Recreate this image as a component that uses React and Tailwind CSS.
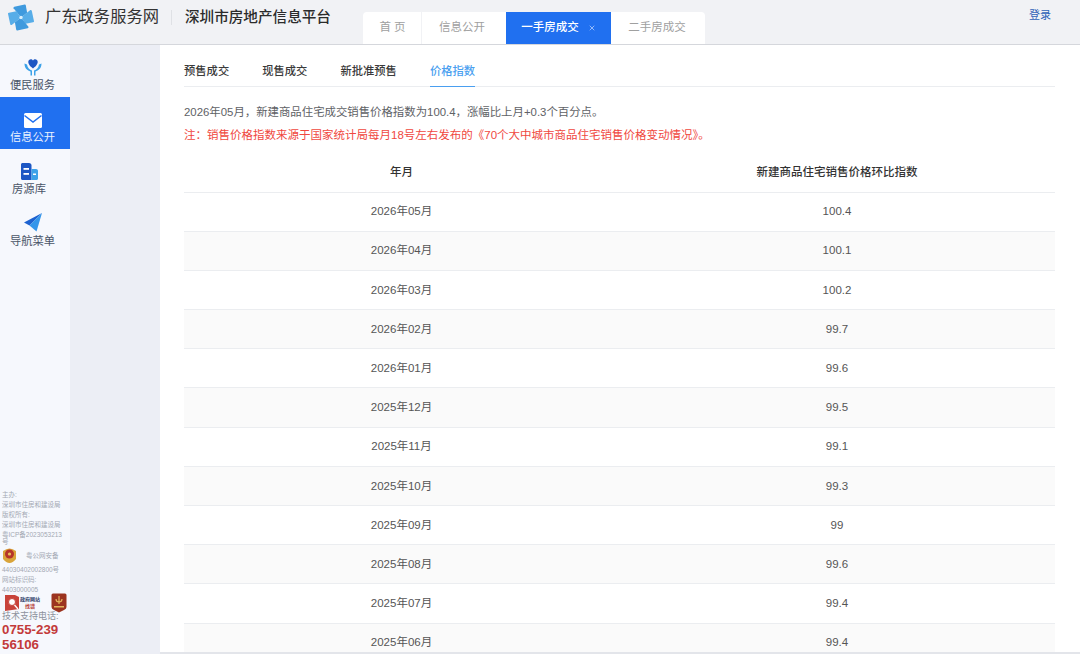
import React from "react";
import { X } from "lucide-react";

const font = "font-['Liberation_Sans','Noto_Sans_CJK_SC',sans-serif]";

const rows = [
  ["2026年05月", "100.4"],
  ["2026年04月", "100.1"],
  ["2026年03月", "100.2"],
  ["2026年02月", "99.7"],
  ["2026年01月", "99.6"],
  ["2025年12月", "99.5"],
  ["2025年11月", "99.1"],
  ["2025年10月", "99.3"],
  ["2025年09月", "99"],
  ["2025年08月", "99.6"],
  ["2025年07月", "99.4"],
  ["2025年06月", "99.4"],
];

function Logo() {
  const blade = "M13 13 L5 3 Q4.6 1.8 5.8 1.4 L17 -1 Q18 -1.1 18.2 0 L19.6 8 Z";
  return (
    <svg width="26" height="27" viewBox="-1 -1 28 28" className="shrink-0">
      <path d={blade} fill="#3f9ade" />
      <path d={blade} fill="#57ade8" transform="rotate(90 13 13)" />
      <path d={blade} fill="#3f9ade" transform="rotate(180 13 13)" />
      <path d={blade} fill="#57ade8" transform="rotate(270 13 13)" />
      <circle cx="13" cy="13" r="1.8" fill="#d8eefb" />
    </svg>
  );
}

function HeartHands() {
  return (
    <svg width="18" height="18" viewBox="0 0 18 18">
      <path d="M9 10.5 C5 7.5 4.3 5.5 4.3 3.8 C4.3 1.3 7.5 0 9 2.4 C10.5 0 13.7 1.3 13.7 3.8 C13.7 5.5 13 7.5 9 10.5 Z" fill="#1d57c4" />
      <path d="M0.5 5.5 C0.5 10.5 3.5 12.5 6.5 13.5 L6.5 17.5 L8 17.5 L8 12.5 C5.5 11.8 3.5 10 3 6.5 Z" fill="#3da2e8" />
      <path d="M17.5 5.5 C17.5 10.5 14.5 12.5 11.5 13.5 L11.5 17.5 L10 17.5 L10 12.5 C12.5 11.8 14.5 10 15 6.5 Z" fill="#3da2e8" />
    </svg>
  );
}

function Mail() {
  return (
    <svg width="18" height="15" viewBox="0 0 18 15">
      <rect width="18" height="15" rx="1.5" fill="#ffffff" />
      <path d="M0.5 2.5 L9 9 L17.5 2.5" fill="none" stroke="#2070f0" strokeWidth="1.5" />
    </svg>
  );
}

function Building() {
  return (
    <svg width="17" height="17" viewBox="0 0 17 17">
      <path d="M1.5 0 H8 C9.5 0 10.5 1 10.5 2.5 V17 H1.5 C0.7 17 0 16.3 0 15.5 V1.5 C0 0.7 0.7 0 1.5 0 Z" fill="#1d57c4" />
      <path d="M10.5 6 H15 C16.2 6 17 6.8 17 8 V15.5 C17 16.3 16.3 17 15.5 17 H10.5 Z" fill="#3da2e8" />
      <rect x="2.5" y="5" width="5.5" height="1.8" fill="#ffffff" />
      <rect x="2.5" y="10" width="5.5" height="1.8" fill="#ffffff" />
      <rect x="12" y="10.5" width="3" height="1.5" fill="#ffffff" />
    </svg>
  );
}

function Plane() {
  return (
    <svg width="18" height="19" viewBox="0 0 18 19">
      <path d="M18 0 L0 9.5 L5.5 12.5 Z" fill="#1d62d0" />
      <path d="M18 0 L5.5 12.5 L12.5 18.5 Z" fill="#3496ea" />
    </svg>
  );
}

function SideItem({ icon, label, active, pr }) {
  return (
    <div className={`h-[52px] ${active ? "bg-[#2070f0] text-[#eaf2ff]" : "text-[#4a5568]"} flex flex-col items-center justify-end pb-[3px] ${pr}`}>
      {icon}
      <span className="text-[11.3px] leading-[17px] mt-[1px] whitespace-nowrap">{label}</span>
    </div>
  );
}

function Badge() {
  return (
    <svg width="15" height="18" viewBox="0 0 15 18" className="shrink-0">
      <path d="M1 4 Q7.5 -1 14 4 L14 12 Q7.5 20 1 12 Z" fill="#d9a43a" />
      <circle cx="7.5" cy="7" r="4.5" fill="#b5342a" />
      <circle cx="7.5" cy="7" r="1.6" fill="#e8c05a" />
    </svg>
  );
}

function ErrorMark() {
  return (
    <svg width="14" height="16" viewBox="0 0 14 16" className="shrink-0">
      <path d="M0 0 H10 L14 2 V14 L0 16 Z" fill="#c8433a" />
      <circle cx="7" cy="7" r="3.5" fill="#fff" stroke="#c8433a" strokeWidth="1" />
      <path d="M9.5 10 L13 14" stroke="#fff" strokeWidth="1.4" />
    </svg>
  );
}

function Shield() {
  return (
    <svg width="16" height="20" viewBox="0 0 16 20" className="shrink-0">
      <path d="M2 0.5 H14 Q15.5 0.5 15.5 2 V14 Q15.5 16 13 17 L8 19.5 L3 17 Q0.5 16 0.5 14 V2 Q0.5 0.5 2 0.5 Z" fill="#9c3420" />
      <path d="M8 3 V11 M5 6 Q5 9 8 9 Q11 9 11 6" fill="none" stroke="#e2b45c" strokeWidth="1.2" />
      <rect x="3" y="13" width="10" height="1.5" fill="#e2b45c" />
    </svg>
  );
}

export default function App() {
  return (
    <div className={`w-[1080px] h-[654px] overflow-hidden flex flex-col bg-white ${font}`}>
      <header className="h-[45px] shrink-0 bg-[#f1f2f5] border-b border-[#d5d7dc] flex items-end">
        <div className="w-[363px] h-full flex items-center pl-[8px] pb-[10px]">
          <Logo />
          <span className="ml-[11px] mb-[2px] text-[16.3px] text-[#333]">广东政务服务网</span>
          <span className="ml-[12px] w-px h-[15px] bg-[#dfe1e5]" />
          <span className="ml-[13px] mt-[2px] text-[14.6px] font-medium text-[#2b2b2b]">深圳市房地产信息平台</span>
        </div>
        <nav className="flex h-[32px] text-[11.5px]">
          <div className="w-[59px] pl-[1px] bg-white rounded-tl-[4px] flex items-center justify-center text-[#a0a0a0] border-r border-[#f1f2f5]">首 页</div>
          <div className="w-[84px] pr-[4px] bg-white flex items-center justify-center text-[#a0a0a0]">信息公开</div>
          <div className="w-[105px] bg-[#2070f0] flex items-center justify-center gap-[9px] text-white font-medium">
            一手房成交
            <X size={8} color="#cfe0ff" />
          </div>
          <div className="w-[94px] pr-[2px] bg-white rounded-tr-[4px] flex items-center justify-center text-[#a0a0a0]">二手房成交</div>
        </nav>
        <span className="ml-auto mr-[29px] mb-[21px] text-[11px] text-[#2f62b8]">登录</span>
      </header>

      <div className="flex-1 flex min-h-0">
        <aside className="w-[70px] shrink-0 bg-[#f6f8fd] flex flex-col">
          <SideItem icon={<HeartHands />} label="便民服务" pr="pr-[5px]" />
          <SideItem icon={<Mail />} label="信息公开" active pr="pr-[5px]" />
          <SideItem icon={<Building />} label="房源库" pr="pr-[12px]" />
          <SideItem icon={<Plane />} label="导航菜单" pr="pr-[5px]" />
          <div className="mt-auto pl-[2px] mb-[2px] text-[6.5px] leading-[10px] text-[#a3a8b3] whitespace-nowrap">
            <p>主办:</p>
            <p>深圳市住房和建设局</p>
            <p>版权所有:</p>
            <p>深圳市住房和建设局</p>
            <p className="leading-[7px] mt-[1px]">粤ICP备2023053213<br />号</p>
            <div className="flex items-center gap-[9px] h-[20px] mt-[1px]">
              <Badge />
              <span>粤公网安备</span>
            </div>
            <p className="-mt-[1px]">44030402002800号</p>
            <p>网站标识码:</p>
            <p>4403000005</p>
            <div className="flex items-center pl-[3px] pr-[3px] h-[15px]">
              <ErrorMark />
              <span className="ml-[1px] text-[5px] leading-[7px] text-[#b5403a] font-bold text-center">
                <span className="text-[#2c3a66]">政府网站</span><br />找错
              </span>
              <span className="ml-auto"><Shield /></span>
            </div>
            <p className="text-[9px] leading-[12px] text-[#8d929c]">技术支持电话:</p>
            <p className="text-[13.3px] leading-[15px] font-bold text-[#c33a3a]">0755-239<br />56106</p>
          </div>
        </aside>

        <div className="w-[90px] shrink-0 bg-[#eceef5]" />

        <main className="flex-1 min-w-0 pl-[24px] pr-[25px] overflow-hidden border-b-2 border-[#e3e5ea]">
          <div className="h-[42px] border-b border-[#ebedf0] flex text-[11.3px] text-[#3a3a3a] font-medium">
            <span className="pt-[18px] mr-[33px]">预售成交</span>
            <span className="pt-[18px] mr-[33px]">现售成交</span>
            <span className="pt-[18px] mr-[33px]">新批准预售</span>
            <span className="h-[42px] pt-[18px] text-[#4a9ff0] border-b border-[#4a9ff0]">价格指数</span>
          </div>
          <p className="mt-[17px] text-[11.4px] leading-[16px] text-[#606266]">2026年05月，新建商品住宅成交销售价格指数为100.4，涨幅比上月+0.3个百分点。</p>
          <p className="mt-[7px] text-[11.5px] leading-[16px] text-[#f0483e]">注：销售价格指数来源于国家统计局每月18号左右发布的《70个大中城市商品住宅销售价格变动情况》。</p>
          <table className="w-full mt-[10px] table-fixed text-[11.5px] text-[#555]">
            <thead>
              <tr className="h-[39px] border-b border-[#ebedf0] text-[#333]">
                <th className="w-[435px] font-medium">年月</th>
                <th className="font-medium">新建商品住宅销售价格环比指数</th>
              </tr>
            </thead>
            <tbody>
              {rows.map(([month, value], i) => (
                <tr key={month} className={`h-[39.2px] border-b border-[#ebedf0] ${i % 2 === 1 ? "bg-[#fafafa]" : ""}`}>
                  <td className="text-center pt-[0.5px]">{month}</td>
                  <td className="text-center pt-[0.5px]">{value}</td>
                </tr>
              ))}
            </tbody>
          </table>
        </main>
      </div>
    </div>
  );
}
